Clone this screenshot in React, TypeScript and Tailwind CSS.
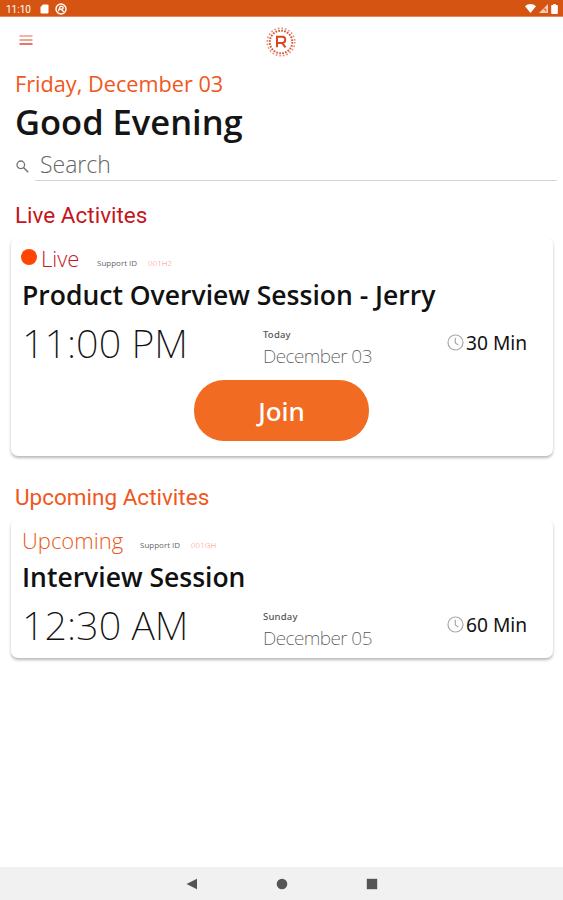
import type { ReactNode } from 'react';

interface Activity {
  status: 'live' | 'upcoming';
  supportId: string;
  title: string;
  time: string;
  day: string;
  date: string;
  duration: string;
}

const liveActivity: Activity = {
  status: 'live',
  supportId: '001H2',
  title: 'Product Overview Session - Jerry',
  time: '11:00 PM',
  day: 'Today',
  date: 'December 03',
  duration: '30 Min',
};

const upcomingActivity: Activity = {
  status: 'upcoming',
  supportId: '001GH',
  title: 'Interview Session',
  time: '12:30 AM',
  day: 'Sunday',
  date: 'December 05',
  duration: '60 Min',
};

function StatusBar() {
  return (
    <div className="flex h-[17px] shrink-0 items-center border-b border-[#e58a5e] bg-[#d55412] pr-[5px] pl-1.5 text-white">
      <span className="w-[34px] pt-[2px] font-['Roboto'] text-[10px] leading-[15px]">11:10</span>
      <svg className="mt-px h-[10px] w-[9px]" viewBox="0 0 9 10" fill="currentColor">
        <path d="M3 0.5h4.5a1 1 0 0 1 1 1v7a1 1 0 0 1-1 1h-6a1 1 0 0 1-1-1V3z" />
      </svg>
      <svg className="mt-px ml-[6px] h-[12px] w-[12px]" viewBox="0 0 12 12" fill="none" stroke="currentColor">
        <circle cx="6" cy="6" r="5" strokeWidth="1.4" />
        <path d="M3.3 8.2 5.2 3.4h1.6a1.3 1.3 0 0 1 0 2.8H4.2M6.2 6.2l2.6 2.6" strokeWidth="1.3" />
      </svg>
      <div className="mt-px ml-auto flex items-center gap-[3px]">
        <svg className="h-[9px] w-[11px]" viewBox="0 0 11 9" fill="currentColor">
          <path d="M0 2.2a8.3 8.3 0 0 1 11 0L5.5 9z" />
        </svg>
        <svg className="h-[9px] w-[9px]" viewBox="0 0 9 9">
          <path d="M9 0v9H0z" fill="currentColor" fillOpacity="0.7" />
          <path d="M4.6 5.2h2.2v2.2" fill="none" stroke="#d55412" strokeWidth="1" />
        </svg>
        <svg className="h-[10px] w-[7px]" viewBox="0 0 7 10" fill="currentColor">
          <path d="M2.2 0h2.6v1H6a.8.8 0 0 1 .8.8v7.4a.8.8 0 0 1-.8.8H1a.8.8 0 0 1-.8-.8V1.8A.8.8 0 0 1 1 1h1.2z" />
        </svg>
      </div>
    </div>
  );
}

function Logo() {
  return (
    <svg className="h-[32px] w-[32px]" viewBox="0 0 32 32" fill="none">
      <circle cx="16" cy="16" r="11.3" stroke="#dc5a3c" strokeWidth="2" strokeDasharray="1.75 1.2" />
      <circle cx="16" cy="16" r="13.8" stroke="#e58a70" strokeWidth="1.5" strokeDasharray="1.6 2.013" />
      <path d="M12 21.3V10.7h5.2a3.1 3.1 0 0 1 0 6.2h-5.2M17 16.9l3.5 4.4" stroke="#d8481f" strokeWidth="2" />
    </svg>
  );
}

function Header() {
  return (
    <header className="flex h-[50px] items-start justify-between pr-[20px] pl-[19px]">
      <svg className="mt-[17px] h-[12px] w-[14px]" viewBox="0 0 14 12">
        <path d="M0.5 2h13" stroke="#f3aaa0" strokeWidth="1.8" />
        <path d="M0.5 6h13" stroke="#ef9a8c" strokeWidth="1.8" />
        <path d="M0.5 10h13" stroke="#e2694d" strokeWidth="1.8" />
      </svg>
      <div className="mt-[9px]">
        <Logo />
      </div>
      <div className="w-[14px]" />
    </header>
  );
}

function SearchField() {
  return (
    <div className="flex h-[38px] items-start">
      <svg className="mt-[17px] ml-[16px] h-[13px] w-[13px]" viewBox="0 0 13 13" fill="none" stroke="#777">
        <circle cx="4.8" cy="4.8" r="3.8" strokeWidth="1.3" />
        <path d="M7.7 7.7 12.2 12.2" strokeWidth="1.5" />
      </svg>
      <div className="mr-[6px] ml-[6px] h-[38px] flex-1 border-b border-[#d6d6d6] pt-[6px] pl-[5px] text-[23px] leading-[30px] font-light text-[#666]">
        Search
      </div>
    </div>
  );
}

function ClockIcon() {
  return (
    <svg className="h-[17px] w-[17px]" viewBox="0 0 17 17" fill="none" stroke="#a9a9a9">
      <circle cx="8.5" cy="8.5" r="7.5" strokeWidth="1.2" />
      <path d="M8.3 3.8V9l3 1.9" strokeWidth="1.2" />
    </svg>
  );
}

function ActivityCard({ activity, children }: { activity: Activity; children?: ReactNode }) {
  const isLive = activity.status === 'live';

  return (
    <div className="mr-[10px] ml-[11px] rounded-[7px] bg-white pt-[7px] shadow-[0_2px_3px_rgba(0,0,0,0.28)]">
      <div className="flex h-[28px] items-start">
        {isLive ? (
          <div className="flex w-[86px] items-start">
            <span className="mt-[5px] ml-[10px] h-[16px] w-[16px] rounded-full bg-[#ff4500]" />
            <span className="ml-[4px] text-[22px] leading-[28px] font-light text-[#c4161c]">Live</span>
          </div>
        ) : (
          <span className="w-[129px] pl-[11px] text-[22px] leading-[28px] font-light text-[#ea5a20]">Upcoming</span>
        )}
        <span className="w-[51px] pt-[12px] text-[8px] leading-[14px] text-[#666]">Support ID</span>
        <span className="pt-[12px] text-[8px] leading-[14px] font-light text-[#ff8a70]">{activity.supportId}</span>
      </div>

      <h3 className="mt-[5px] pl-[11px] text-[26.5px] leading-[36px] font-semibold text-[#111]">{activity.title}</h3>

      <div className="mt-[8px] flex h-[43px] items-start pl-[11px] font-['Noto_Sans',sans-serif]">
        <div className="w-[241px] text-[39.5px] leading-[44px] font-extralight text-[#111]">{activity.time}</div>
        <div className="w-[184px]">
          <div className="pt-[7px] text-[9.5px] leading-[14px] font-medium tracking-[0.2px] text-[#555]">{activity.day}</div>
          <div className="mt-[1px] text-[19px] leading-[26px] font-extralight tracking-[-0.55px] text-[#555]">{activity.date}</div>
        </div>
        <div className="flex items-start gap-[2px]">
          <span className="pt-[13px]"><ClockIcon /></span>
          <span className="pt-[9px] text-[19.2px] leading-[26px] text-[#111]">{activity.duration}</span>
        </div>
      </div>

      {children}
    </div>
  );
}

export default function App() {
  return (
    <div className="flex h-[900px] w-full flex-col overflow-hidden bg-white font-['Open_Sans',sans-serif] whitespace-nowrap">
      <StatusBar />
      <Header />

      <main className="flex-1">
        <p className="pl-[15px] text-[21.7px] leading-[34px] text-[#f0571c]">Friday, December 03</p>
        <h1 className="pl-[15px] text-[34.5px] leading-[42px] font-semibold text-[#151515]">Good Evening</h1>
        <SearchField />

        <h2 className="mt-[19px] h-[37px] pl-[15px] font-['Roboto'] text-[22.5px] leading-[30px] text-[#c4161c]">
          Live Activites
        </h2>
        <ActivityCard activity={liveActivity}>
          <div className="flex h-[92px] justify-center pt-[16px] pr-[1px]">
            <button className="h-[61px] w-[175px] rounded-[30px] bg-[#f26b22] font-['Noto_Sans',sans-serif] text-[26px] leading-[60px] font-medium text-white">
              Join
            </button>
          </div>
        </ActivityCard>

        <h2 className="mt-[26px] h-[37px] pl-[15px] font-['Roboto'] text-[22.5px] leading-[30px] text-[#f0571c]">
          Upcoming Activites
        </h2>
        <ActivityCard activity={upcomingActivity}>
          <div className="h-[12px]" />
        </ActivityCard>
      </main>

      <nav className="flex h-[33px] shrink-0 items-center justify-center gap-[78px] bg-[#f1f1f1] text-[#555]">
        <svg className="h-[12px] w-[12px]" viewBox="0 0 12 12" fill="currentColor">
          <path d="M0.5 6 11 0.8v10.4z" />
        </svg>
        <svg className="h-[12px] w-[12px]" viewBox="0 0 12 12" fill="currentColor">
          <circle cx="6" cy="6" r="5.3" />
        </svg>
        <svg className="h-[12px] w-[12px]" viewBox="0 0 12 12" fill="currentColor">
          <path d="M0.8 0.8h10.4v10.4H0.8z" />
        </svg>
      </nav>
    </div>
  );
}
